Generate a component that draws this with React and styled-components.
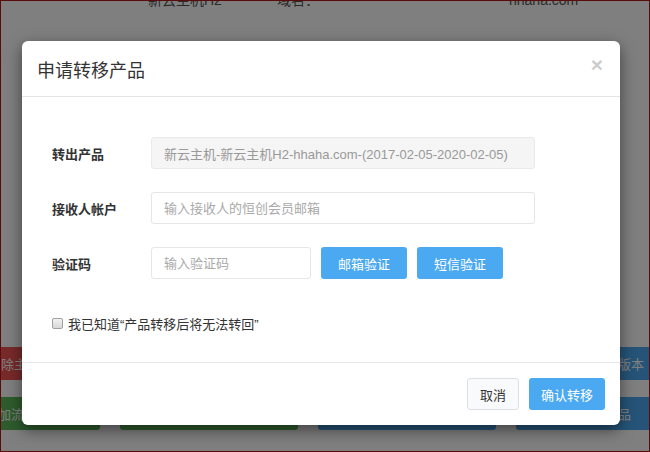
import React from 'react'
import styled, { createGlobalStyle } from 'styled-components'

const GlobalStyle = createGlobalStyle`
  * { box-sizing: border-box; }
  html, body { margin: 0; padding: 0; }
  body {
    font-family: "Liberation Sans", "Noto Sans CJK SC", sans-serif;
    color: #333;
  }
`

const Page = styled.div`
  position: relative;
  width: 650px;
  height: 452px;
  overflow: hidden;
  background: #fff;
  border: 1px solid #5a0b0b;
  display: flex;
  flex-direction: column;
`

const TopRow = styled.div`
  display: flex;
  margin-top: -11px;
  padding-left: 147px;
  height: 20px;
  line-height: 20px;
  font-size: 14px;
  color: #555;
  white-space: nowrap;
`

const TopCell = styled.span`
  width: ${({ w }) => w}px;
  flex: none;
`

const Actions = styled.div`
  margin-top: 337px;
  display: flex;
  flex-direction: column;
  gap: 17px;
`

const ActionRow = styled.div`
  display: flex;
  justify-content: space-between;
  margin: 0 -28px 0 -57px;
`

const ActionGrid = styled.div`
  display: grid;
  grid-template-columns: repeat(4, 178px);
  gap: 20px;
  margin-left: -79px;
`

const ActionButton = styled.div`
  width: ${({ w }) => (w ? `${w}px` : 'auto')};
  height: 33px;
  border-radius: 3px;
  background: ${({ tone }) =>
    tone === 'red' ? '#f05454' : tone === 'green' ? '#5cb85c' : '#4aa9f0'};
  color: #fff;
  font-size: 13px;
  display: flex;
  align-items: center;
  justify-content: center;
  white-space: nowrap;
`

const Overlay = styled.div`
  position: absolute;
  inset: 0;
  background: rgba(0, 0, 0, 0.5);
  padding: 40px 0 0 21px;
`

const Modal = styled.div`
  width: 598px;
  background: #fff;
  border-radius: 6px;
  box-shadow: 0 5px 15px rgba(0, 0, 0, 0.5);
  display: flex;
  flex-direction: column;
`

const Header = styled.div`
  height: 56px;
  padding: 0 15px;
  border-bottom: 1px solid #e5e5e5;
  display: flex;
  align-items: center;
  justify-content: space-between;
`

const Title = styled.h4`
  margin: 0;
  font-size: 18px;
  font-weight: normal;
  color: #333;
`

const Close = styled.span`
  font-size: 21px;
  font-weight: bold;
  line-height: 1;
  color: #000;
  opacity: 0.2;
  margin-top: -8px;
  margin-right: 2px;
`

const Body = styled.div`
  padding: 40px 30px 29px;
  display: flex;
  flex-direction: column;
  gap: 23px;
`

const Row = styled.div`
  display: flex;
  align-items: center;
  gap: 10px;
`

const Label = styled.label`
  width: 89px;
  flex: none;
  font-size: 13px;
  font-weight: bold;
  color: #333;
`

const Input = styled.input`
  width: ${({ w }) => w}px;
  height: 32px;
  padding: 0 12px;
  border: 1px solid ${({ disabled }) => (disabled ? '#eaeaea' : '#e6e6e6')};
  border-radius: 3px;
  background: ${({ disabled }) => (disabled ? '#f5f5f5' : '#fff')};
  font-family: inherit;
  font-size: 13px;
  color: #999;
  outline: none;
  &::placeholder { color: #aaa; }
`

const Button = styled.button`
  height: 32px;
  padding: 0 ${({ pad }) => pad}px;
  border-radius: 3px;
  font-family: inherit;
  font-size: 13px;
  cursor: pointer;
  border: ${({ primary }) => (primary ? 'none' : '1px solid #dcdfe3')};
  background: ${({ primary }) => (primary ? '#4aa9f0' : '#f9fafb')};
  color: ${({ primary }) => (primary ? '#fff' : '#333')};
`

const CheckRow = styled.label`
  margin-top: 11px;
  height: 20px;
  display: flex;
  align-items: center;
  gap: 5px;
  font-size: 13px;
  color: #333;
`

const Check = styled.input`
  appearance: none;
  margin: 0;
  width: 11px;
  height: 11px;
  border: 1px solid #a0a0a0;
  border-radius: 2px;
  background: linear-gradient(#f2f2f2, #d8d8d8);
`

const Footer = styled.div`
  border-top: 1px solid #e5e5e5;
  padding: 15px;
  display: flex;
  justify-content: flex-end;
  gap: 10px;
`

export default function App() {
  return (
    <>
      <GlobalStyle />
      <Page>
        <TopRow>
          <TopCell w={129}>新云主机H2</TopCell>
          <TopCell w={232}>域名：</TopCell>
          <TopCell w={120}>hhaha.com</TopCell>
        </TopRow>
        <Actions>
          <ActionRow>
            <ActionButton tone="red" w={140}>删除主机</ActionButton>
            <ActionButton tone="blue" w={118}>升级版本</ActionButton>
          </ActionRow>
          <ActionGrid>
            <ActionButton tone="green">增加流量</ActionButton>
            <ActionButton tone="green">续费主机</ActionButton>
            <ActionButton tone="blue">重置密码</ActionButton>
            <ActionButton tone="blue">转移产品</ActionButton>
          </ActionGrid>
        </Actions>

        <Overlay>
          <Modal>
            <Header>
              <Title>申请转移产品</Title>
              <Close>×</Close>
            </Header>
            <Body>
              <Row>
                <Label>转出产品</Label>
                <Input w={384} disabled value="新云主机-新云主机H2-hhaha.com-(2017-02-05-2020-02-05)" readOnly />
              </Row>
              <Row>
                <Label>接收人帐户</Label>
                <Input w={384} placeholder="输入接收人的恒创会员邮箱" />
              </Row>
              <Row>
                <Label>验证码</Label>
                <Input w={160} placeholder="输入验证码" />
                <Button primary pad={17}>邮箱验证</Button>
                <Button primary pad={17}>短信验证</Button>
              </Row>
              <CheckRow>
                <Check type="checkbox" />
                我已知道“产品转移后将无法转回”
              </CheckRow>
            </Body>
            <Footer>
              <Button pad={12}>取消</Button>
              <Button primary pad={12}>确认转移</Button>
            </Footer>
          </Modal>
        </Overlay>
      </Page>
    </>
  )
}
